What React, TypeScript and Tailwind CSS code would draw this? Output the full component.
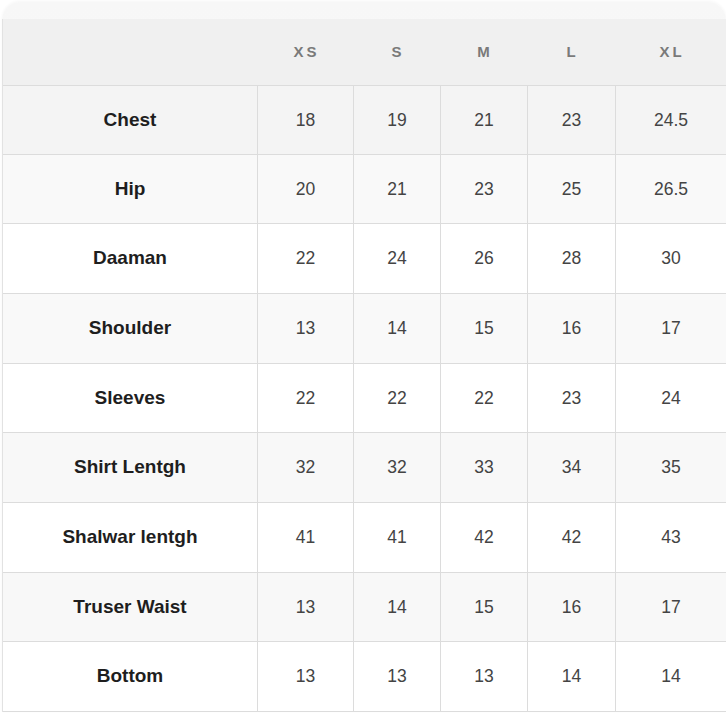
import React from "react";

const sizes = ["XS", "S", "M", "L", "XL"];
const rows: { label: string; values: string[]; bg: string; h: string }[] = [
  { label: "Chest", values: ["18", "19", "21", "23", "24.5"], bg: "bg-[#f4f4f4]", h: "h-[69px]" },
  { label: "Hip", values: ["20", "21", "23", "25", "26.5"], bg: "bg-[#f9f9f9]", h: "h-[69px]" },
  { label: "Daaman", values: ["22", "24", "26", "28", "30"], bg: "bg-white", h: "h-[70px]" },
  { label: "Shoulder", values: ["13", "14", "15", "16", "17"], bg: "bg-[#f9f9f9]", h: "h-[70px]" },
  { label: "Sleeves", values: ["22", "22", "22", "23", "24"], bg: "bg-white", h: "h-[69px]" },
  { label: "Shirt Lentgh", values: ["32", "32", "33", "34", "35"], bg: "bg-[#f8f8f8]", h: "h-[70px]" },
  { label: "Shalwar lentgh", values: ["41", "41", "42", "42", "43"], bg: "bg-white", h: "h-[70px]" },
  { label: "Truser Waist", values: ["13", "14", "15", "16", "17"], bg: "bg-[#f8f8f8]", h: "h-[69px]" },
  { label: "Bottom", values: ["13", "13", "13", "14", "14"], bg: "bg-white", h: "h-[70px]" },
];

const cols = "grid grid-cols-[254px_96px_87px_87px_88px_1fr]";

export default function App() {
  return (
    <div className="w-[726px] h-[717px] bg-white overflow-hidden" style={{ fontFamily: '"Liberation Sans", Arial, sans-serif' }}>
      <div className="mt-[2px] ml-[2px] rounded-t-[18px] bg-gradient-to-b from-[#f7f7f7] to-white pt-[17px] shadow-[0_-1px_3px_rgba(0,0,0,0.04)]">
        <div className="border-l border-[#e2e2e2]">
          <div className={`${cols} h-[67px] bg-[#f0f0f0] border-b border-[#dcdcdc]`}>
            <div />
            {sizes.map((s) => (
              <div key={s} className="flex items-center justify-center pl-[3px] text-[15px] font-bold text-[#7a7a7a] tracking-[3px]">
                {s}
              </div>
            ))}
          </div>
          {rows.map((r) => (
            <div key={r.label} className={`${cols} ${r.h} ${r.bg} border-b border-[#dcdcdc]`}>
              <div className="flex items-center justify-center text-[19px] font-bold text-[#1e1e1e]">{r.label}</div>
              {r.values.map((v, i) => (
                <div key={i} className="flex items-center justify-center border-l border-[#dcdcdc] text-[17.5px] text-[#444]">
                  {v}
                </div>
              ))}
            </div>
          ))}
        </div>
      </div>
    </div>
  );
}
